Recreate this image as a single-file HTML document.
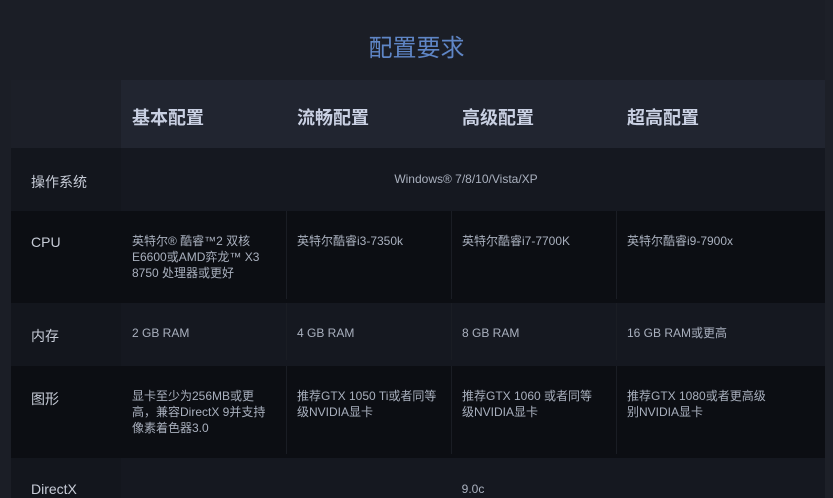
<!DOCTYPE html>
<html><head><meta charset="utf-8"><style>
*{margin:0;padding:0;box-sizing:border-box}
body{width:833px;height:498px;overflow:hidden;background:#1b1e26;font-family:"Liberation Sans","Noto Sans CJK SC",sans-serif;position:relative}
.t{position:absolute;left:0;width:833px;top:28px;text-align:center;color:#5f86c6;font-size:24px}
.strip{position:absolute;left:825px;top:0;width:8px;height:498px;background:#1d2028}
.r{position:absolute;left:11px;width:814px}
.c{position:absolute;top:0;bottom:0}
.h{font-weight:bold;font-size:18px;color:#c9d0e2;position:absolute}
.l{position:absolute;left:20px;color:#c6cbd6;font-size:14px}
.v{position:absolute;color:#a9b0be;font-size:12px;line-height:16px}
.d{position:absolute;width:1px;background:#1a1d24}
</style></head><body>
<div class="t">配置要求</div>
<div class="strip"></div>
<div class="r" style="top:80px;height:68px;background:#212530">
 <div class="c" style="left:0;width:110px;background:#1c1f28"></div>
 <div class="h" style="left:121px;top:24px">基本配置</div>
 <div class="h" style="left:286px;top:24px">流畅配置</div>
 <div class="h" style="left:451px;top:24px">高级配置</div>
 <div class="h" style="left:616px;top:24px">超高配置</div>
</div>
<div class="r" style="top:148px;height:63px;background:#151820">
 <div class="c" style="left:0;width:110px;background:#13161d"></div>
 <div class="l" style="top:24px">操作系统</div>
 <div class="v" style="left:110px;width:704px;text-align:center;top:23px;padding-right:14px">Windows® 7/8/10/Vista/XP</div>
</div>
<div class="r" style="top:211px;height:92px;background:#0c0e13">
 <div class="l" style="top:23px">CPU</div>
 <div class="d" style="left:275px;top:0;height:88px"></div><div class="d" style="left:440px;top:0;height:88px"></div><div class="d" style="left:605px;top:0;height:88px"></div>
 <div class="v" style="left:121px;top:22px;width:136px">英特尔® 酷睿™2 双核 E6600或AMD弈龙™ X3 8750 处理器或更好</div>
 <div class="v" style="left:286px;top:22px">英特尔酷睿i3-7350k</div>
 <div class="v" style="left:451px;top:22px">英特尔酷睿i7-7700K</div>
 <div class="v" style="left:616px;top:22px">英特尔酷睿i9-7900x</div>
</div>
<div class="r" style="top:303px;height:63px;background:#151820">
 <div class="c" style="left:0;width:110px;background:#13161d"></div>
 <div class="l" style="top:23px">内存</div>
 <div class="d" style="left:275px;top:0;height:57px"></div><div class="d" style="left:440px;top:0;height:57px"></div><div class="d" style="left:605px;top:0;height:57px"></div>
 <div class="v" style="left:121px;top:22px">2 GB RAM</div>
 <div class="v" style="left:286px;top:22px">4 GB RAM</div>
 <div class="v" style="left:451px;top:22px">8 GB RAM</div>
 <div class="v" style="left:616px;top:22px">16 GB RAM或更高</div>
</div>
<div class="r" style="top:366px;height:92px;background:#0c0e13">
 <div class="l" style="top:23px">图形</div>
 <div class="d" style="left:275px;top:0;height:88px"></div><div class="d" style="left:440px;top:0;height:88px"></div><div class="d" style="left:605px;top:0;height:88px"></div>
 <div class="v" style="left:121px;top:22px;width:140px">显卡至少为256MB或更<br>高，兼容DirectX 9并支持<br>像素着色器3.0</div>
 <div class="v" style="left:286px;top:22px;width:150px">推荐GTX 1050 Ti或者同等<br>级NVIDIA显卡</div>
 <div class="v" style="left:451px;top:22px;width:150px">推荐GTX 1060 或者同等<br>级NVIDIA显卡</div>
 <div class="v" style="left:616px;top:22px;width:150px">推荐GTX 1080或者更高级<br>别NVIDIA显卡</div>
</div>
<div class="r" style="top:458px;height:40px;background:#151820">
 <div class="c" style="left:0;width:110px;background:#13161d"></div>
 <div class="l" style="top:23px">DirectX</div>
 <div class="v" style="left:110px;width:704px;text-align:center;top:23px">9.0c</div>
</div>
</body></html>
